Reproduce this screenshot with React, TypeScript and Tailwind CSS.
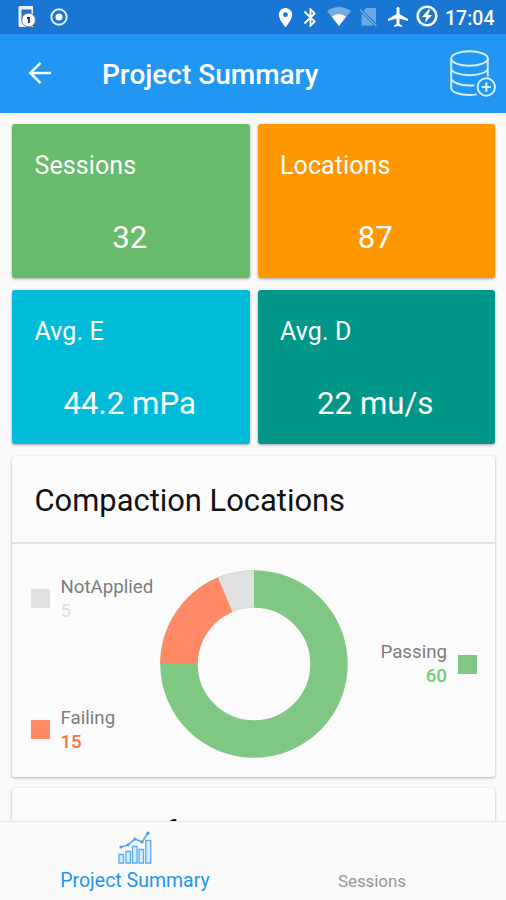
import React from "react";
import { MdLocationOn, MdBluetooth, MdAirplanemodeActive } from "react-icons/md";

function StatusBar() {
  return (
    <div className="flex h-[34px] shrink-0 items-center bg-[#1976d2] text-white">
      <svg className="ml-[17px] h-6 w-5" viewBox="0 0 20 24" fill="none">
        <path d="M3 1h13v21H3a1.500 1.500 0 0 1-1.500-1.500v-18A1.500 1.500 0 0 1 3 1z" fill="#e9f3fd" />
        <path d="M4.500 4.500h10V15h-10z" fill="#2371bd" />
        <circle cx="11.600" cy="15" r="6.800" fill="#fff" stroke="#6f7f91" strokeWidth="1" />
        <path d="M10 13h2v5" stroke="#283646" strokeWidth="1.800" />
      </svg>
      <svg className="ml-[13px] h-[18px] w-[18px]" viewBox="0 0 18 18" fill="none">
        <circle cx="9" cy="9" r="7.700" stroke="#e8f3ff" strokeWidth="1.900" />
        <circle cx="9" cy="9" r="3.500" fill="#fff" />
      </svg>
      <div className="ml-auto flex items-center pr-[10px]">
        <MdLocationOn className="h-[23px] w-[23px]" />
        <MdBluetooth className="ml-[2px] h-[23px] w-[23px]" />
        <svg className="ml-[5px] h-5 w-6" viewBox="0 0 24 20">
          <path d="M0 4Q12-4 24 4L12 19z" fill="#fff" opacity=".4" />
          <path d="M4.800 9.500Q12 4.500 19.200 9.500L12 19z" fill="#fff" />
        </svg>
        <svg className="ml-[8px] h-5 w-5" viewBox="0 0 20 20">
          <path d="M7 1h10v15L4.500 4zM2.500 6L15 18.500H2.500z" fill="#fff" opacity=".36" />
          <path d="M1 2.500L17.500 19" stroke="#fff" opacity=".4" strokeWidth="1.200" />
        </svg>
        <MdAirplanemodeActive className="ml-[7px] h-[24px] w-[24px]" />
        <svg className="ml-[6px] h-[22px] w-[22px] -translate-y-px" viewBox="0 0 22 22">
          <circle cx="11" cy="11" r="9.300" fill="none" stroke="#fff" strokeWidth="2.600" />
          <path d="M12.500 4.500L6 12h4l-.8 5.500L16 10h-4l2-5.500z" fill="#fff" />
        </svg>
        <span className="ml-[7px] mt-[3px] w-[51px] whitespace-nowrap text-[19.500px] font-medium leading-6">17:04</span>
      </div>
    </div>
  );
}

function BackArrow() {
  return (
    <svg className="h-[24px] w-[25px]" viewBox="0 0 25 24" fill="none" stroke="#fff" strokeWidth="2.500">
      <path d="M25 12H4M14.500 1.800L4.300 12l10.200 10.200" />
    </svg>
  );
}

function DatabaseAdd() {
  return (
    <svg className="h-12 w-12" viewBox="0 0 48 48" fill="none" stroke="#d9eeff" strokeWidth="1.900">
      <ellipse cx="20.500" cy="8.500" rx="18.300" ry="7.300" />
      <path d="M2.200 8.500v29.500c0 4 8 7 18.300 7 2.500 0 5-.2 7.200-.6M38.800 8.500v18M2.200 18.200c0 4 8 7 18.300 7s18.300-3 18.300-7M2.200 28c0 4 8 7.500 18.300 7.500 1.500 0 3 0 5-.3" />
      <circle cx="37.300" cy="37" r="8.700" strokeWidth="2" />
      <path d="M37.300 32.300v9.400M32.600 37h9.400" strokeWidth="2.200" />
    </svg>
  );
}

function StatCard({ label, value, color }: { label: string; value: string; color: string }) {
  return (
    <div className={`flex h-[154px] flex-col rounded-[3px] text-white shadow-[0_1px_3px_rgba(0,0,0,0.35)] ${color}`}>
      <div className="pl-[22.500px] pt-[26px] text-[25px] leading-8 tracking-[0.100px]">{label}</div>
      <div className="mt-[36px] pr-[2px] text-center text-[31.200px] leading-[40px]">{value}</div>
    </div>
  );
}

function Donut() {
  return (
    <svg className="h-[188px] w-[188px]" viewBox="-94 -94 188 188" fill="none" strokeWidth="37.500">
      <circle r="75" stroke="#81c784" />
      <path d="M-75 0A75 75 0 0 1-28.700-69.290" stroke="#ff8a65" />
      <path d="M-28.700-69.290A75 75 0 0 1 0-75" stroke="#e0e0e0" />
    </svg>
  );
}

function Legend({ label, value, swatch, valueClass, reverse = false }: { label: string; value: string; swatch: string; valueClass: string; reverse?: boolean }) {
  return (
    <div className={`flex items-center gap-[11px] ${reverse ? "flex-row-reverse text-right" : ""}`}>
      <div className={`h-[19px] w-[19px] ${swatch}`} />
      <div className="text-[18.700px] leading-[24px] text-[#7d7d7d]">
        <div>{label}</div>
        <div className={valueClass}>{value}</div>
      </div>
    </div>
  );
}

function ChartIcon() {
  return (
    <svg className="h-[34px] w-[36px]" viewBox="0 0 36 34" fill="#d8ecfd" stroke="#5aabf0" strokeWidth="1.300">
      <path d="M2 23.500h4.500v8.500H2zM9 20.500h4.500v11.500H9zM15.500 15.500h4.500v16.500h-4.500zM22 18.500h4.500v13.500H22zM28.800 9.500h5v22.500h-5z" />
      <path d="M4 16l7-2 7-6 7 3 6-9" fill="none" strokeWidth="1.800" />
      <g fill="#4a9fe8" stroke="none">
        <circle cx="4" cy="16" r="1.600" /><circle cx="11" cy="14" r="1.400" /><circle cx="18" cy="8" r="1.600" /><circle cx="25" cy="11" r="1.600" /><circle cx="31" cy="2.200" r="1.600" />
      </g>
    </svg>
  );
}

export default function App() {
  return (
    <div className="flex h-[900px] w-[506px] flex-col overflow-hidden bg-[#fafafa] font-[Roboto,sans-serif]">
      <StatusBar />
      <header className="flex h-[78.500px] shrink-0 items-center bg-[#2196f3] pl-[26px] pr-[9.500px] text-white">
        <BackArrow />
        <h1 className="ml-[51px] mt-[3px] text-[28px] font-medium leading-8">Project Summary</h1>
        <div className="ml-auto pt-px"><DatabaseAdd /></div>
      </header>
      <main className="min-h-0 flex-1 overflow-hidden pl-3 pr-[11px] pt-[11.800px]">
        <div className="grid grid-cols-2 gap-x-2 gap-y-3">
          <StatCard label="Sessions" value="32" color="bg-[#69bb6c]" />
          <StatCard label="Locations" value="87" color="bg-[#ff9800]" />
          <StatCard label="Avg. E" value="44.2 mPa" color="bg-[#00bcd8]" />
          <StatCard label="Avg. D" value="22 mu/s" color="bg-[#009688]" />
        </div>
        <section className="mt-3 h-[320.700px] rounded-[3px] bg-[#fbfbfb] shadow-[0_1px_3px_rgba(0,0,0,0.3)]">
          <h2 className="flex h-[87.700px] items-center border-b-2 border-[#e1e1e1] pl-[22.500px] pt-[4px] text-[30.900px] text-[#111]">Compaction Locations</h2>
          <div className="flex h-[232px] items-center justify-between pl-[18.500px] pr-[18px] pt-[9px]">
            <div className="flex w-[129px] flex-col gap-[83px]">
              <Legend label="NotApplied" value="5" swatch="bg-[#e0e0e0]" valueClass="text-[#dedede]" />
              <Legend label="Failing" value="15" swatch="bg-[#ff8a65]" valueClass="font-medium text-[#ff7043]" />
            </div>
            <Donut />
            <div className="w-[129px]">
              <Legend label="Passing" value="60" swatch="bg-[#81c784]" valueClass="font-medium text-[#74c978]" reverse />
            </div>
          </div>
        </section>
        <section className="mt-[11px] h-[100px] rounded-[3px] bg-[#fbfbfb] pl-[22.500px] pt-[25px] shadow-[0_1px_3px_rgba(0,0,0,0.3)]">
          <h2 className="text-[31px] leading-[40px] text-[#111]">Project Info</h2>
        </section>
      </main>
      <nav className="z-10 grid h-[79px] shrink-0 grid-cols-[269px_1fr] border-t border-[#e6e6e6] bg-[#fafafa]">
        <div className="flex flex-col items-center pl-px pt-[9px] text-[#2196f3]">
          <ChartIcon />
          <div className="mt-[4px] text-[19.500px] leading-6">Project Summary</div>
        </div>
        <div className="pl-[69px] pt-[47px] text-[17px] leading-6 tracking-[-0.100px] text-[#999]">Sessions</div>
      </nav>
    </div>
  );
}
